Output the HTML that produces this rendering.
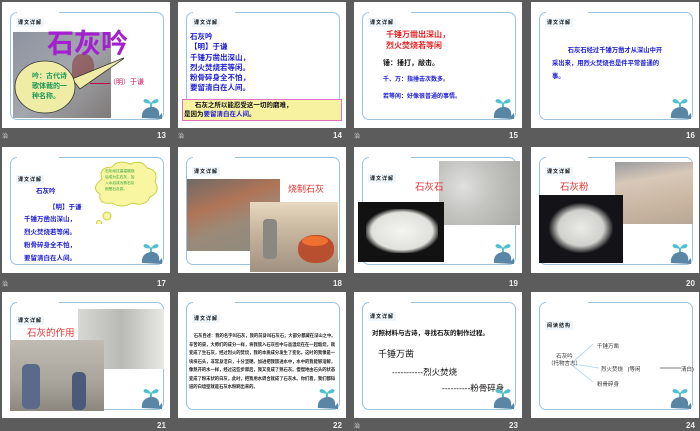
<!DOCTYPE html>
<html><head><meta charset="utf-8"><style>
*{margin:0;padding:0;box-sizing:border-box}
body{width:700px;height:431px;background:#5c5c5c;position:relative;overflow:hidden;font-family:"Liberation Sans","Noto Sans CJK SC",sans-serif}
.s{position:absolute;width:168px;height:126px;background:#fff;overflow:hidden}
.f{position:absolute;left:8px;top:10px;width:154px;height:108px;border:1.5px solid #9cc3dc;border-radius:7px}
.g{position:absolute;left:15px;top:8px;width:42px;height:4px;background:#fff}
.lab{position:absolute;left:14px;top:16px;font-size:5px;font-weight:bold;color:#111;background:#eef6fb;padding:1px 2px;letter-spacing:1px}
.n{position:absolute;color:#eee;font-size:8px;font-weight:bold}
.z{position:absolute;color:#ddd;font-size:6px}
.a{position:absolute;white-space:nowrap}
.w{position:absolute;left:137px;top:92px}
.bl{color:#1a1ad8;font-weight:bold}
</style></head><body>

<!-- Slide 13 -->
<div class="s" style="left:2px;top:2px">
<div class="f"></div><div class="g"></div>
<div style="position:absolute;left:11px;top:30px;width:98px;height:86px;background:linear-gradient(135deg,#8d93a0,#a3a6ad 50%,#7f7a78)"></div>
<div style="position:absolute;left:70px;top:52px;width:22px;height:30px;background:#8b4a4a;border-radius:40%;opacity:.7"></div>
<div class="lab">课文详解</div>
<div class="a" style="left:45px;top:20px;font-size:27px;color:#a41fd0;font-weight:bold">石灰吟</div>
<svg style="position:absolute;left:12px;top:55px" width="110" height="60"><path d="M58 22 L112 0 L66 32 Z" fill="#efeca5" stroke="#333" stroke-width=".8"/><ellipse cx="31" cy="30" rx="30" ry="26" fill="#efeca5" stroke="#333" stroke-width=".8"/></svg>
<div class="a" style="left:30px;top:70px;font-size:7px;line-height:10px;color:#1a9a5a;font-weight:bold">吟：古代诗<br>歌体裁的一<br>种名称。</div>
<div style="position:absolute;left:88px;top:81px;width:20px;height:1px;background:#c00040"></div>
<div class="a" style="left:107px;top:75px;font-size:7px;color:#d0105a">（明）于谦</div>
<svg class="w" width="24" height="26" viewBox="0 0 24 26"><path d="M12 9 C8 3 3 5 5 8 C7 10 10 9 12 10 C14 9 17 10 19 8 C21 5 16 3 12 9z" fill="#4fc0d0"/><rect x="11" y="9" width="2" height="5" fill="#4fc0d0"/><path d="M3 24 C2 16 8 13 13 13 C19 13 21 18 20 22 L23 19 L23 25 Z" fill="#5a86a6"/></svg>
</div>
<div class="z" style="left:2px;top:131px">治</div><div class="n" style="left:157px;top:131px">13</div>

<!-- Slide 14 -->
<div class="s" style="left:178px;top:2px">
<div class="f"></div><div class="g"></div>
<div class="lab">课文详解</div>
<div class="a bl" style="left:12px;top:30px;font-size:7.5px;line-height:10.3px">石灰吟<br>【明】于谦<br>千锤万凿出深山，<br>烈火焚烧若等闲。<br>粉骨碎身全不怕，<br>要留清白在人间。</div>
<svg class="w" width="24" height="26" viewBox="0 0 24 26"><path d="M12 9 C8 3 3 5 5 8 C7 10 10 9 12 10 C14 9 17 10 19 8 C21 5 16 3 12 9z" fill="#4fc0d0"/><rect x="11" y="9" width="2" height="5" fill="#4fc0d0"/><path d="M3 24 C2 16 8 13 13 13 C19 13 21 18 20 22 L23 19 L23 25 Z" fill="#5a86a6"/></svg>
<div style="position:absolute;left:4px;top:97px;width:160px;height:22px;background:#f7f2a0;border:1px solid #e070c0"></div>
<div class="a" style="left:6px;top:99px;font-size:6.5px;line-height:9px;color:#111;font-weight:bold">&nbsp;&nbsp;&nbsp;&nbsp;&nbsp;&nbsp;石灰之所以能忍受这一切的磨难，<br>是因为<span style="color:#1a1ad8">要留清白在人间</span>。</div>
</div>
<div class="z" style="left:178px;top:131px">治</div><div class="n" style="left:333px;top:131px">14</div>

<!-- Slide 15 -->
<div class="s" style="left:354px;top:2px">
<div class="f"></div><div class="g"></div>
<div class="lab">课文详解</div>
<div class="a" style="left:32px;top:27px;font-size:8px;line-height:11px;color:#e82020;font-weight:bold">千锤万凿出深山，<br>烈火焚烧若等闲</div>
<div class="a" style="left:29px;top:56px;font-size:7px;color:#111;font-weight:bold">锤：捶打，敲击。</div>
<div class="a bl" style="left:29px;top:72px;font-size:6px">千、万：指捶击次数多。</div>
<div class="a bl" style="left:29px;top:89px;font-size:6px">若等闲：好像很普通的事情。</div>
<svg class="w" width="24" height="26" viewBox="0 0 24 26"><path d="M12 9 C8 3 3 5 5 8 C7 10 10 9 12 10 C14 9 17 10 19 8 C21 5 16 3 12 9z" fill="#4fc0d0"/><rect x="11" y="9" width="2" height="5" fill="#4fc0d0"/><path d="M3 24 C2 16 8 13 13 13 C19 13 21 18 20 22 L23 19 L23 25 Z" fill="#5a86a6"/></svg>
</div>
<div class="z" style="left:354px;top:131px">治</div><div class="n" style="left:509px;top:131px">15</div>

<!-- Slide 16 -->
<div class="s" style="left:531px;top:2px">
<div class="f"></div><div class="g"></div>
<div class="lab">课文详解</div>
<div class="a bl" style="left:21px;top:42px;font-size:6.3px;line-height:13px">&nbsp;&nbsp;&nbsp;&nbsp;&nbsp;&nbsp;&nbsp;&nbsp;&nbsp;石灰石经过千锤万凿才从深山中开<br>采出来，用烈火焚烧也是件平常普通的<br>事。</div>
<svg class="w" width="24" height="26" viewBox="0 0 24 26"><path d="M12 9 C8 3 3 5 5 8 C7 10 10 9 12 10 C14 9 17 10 19 8 C21 5 16 3 12 9z" fill="#4fc0d0"/><rect x="11" y="9" width="2" height="5" fill="#4fc0d0"/><path d="M3 24 C2 16 8 13 13 13 C19 13 21 18 20 22 L23 19 L23 25 Z" fill="#5a86a6"/></svg>
</div>
<div class="n" style="left:686px;top:131px">16</div>

<!-- Slide 17 -->
<div class="s" style="left:2px;top:147px">
<div class="f"></div><div class="g"></div>
<div class="lab" style="top:28px">课文详解</div>
<div class="a bl" style="left:34px;top:38px;font-size:6.5px">石灰吟</div>
<div class="a bl" style="left:47px;top:54px;font-size:6.5px">【明】于谦</div>
<div class="a bl" style="left:22px;top:66px;font-size:6.5px;line-height:13px">千锤万凿出深山，<br>烈火焚烧若等闲。<br>粉骨碎身全不怕，<br>要留清白在人间。</div>
<svg style="position:absolute;left:88px;top:12px" width="72" height="65"><path d="M12 20 q-4 -12 10 -12 q6 -8 18 -3 q12 -5 17 4 q12 2 8 14 q6 10 -5 15 q-4 10 -18 6 q-10 6 -20 0 q-14 2 -12 -9 q-10 -6 2 -15z" fill="#f8f6a0" stroke="#c8d040" stroke-width="1"/><circle cx="17" cy="57" r="4" fill="#f8f6a0" stroke="#c8d040"/><circle cx="9" cy="64" r="2.5" fill="#f8f6a0" stroke="#c8d040"/></svg>
<div class="a" style="left:103px;top:21px;font-size:3.7px;line-height:6px;color:#2a9a3a">石灰经过高温锻烧<br>后成为生石灰，加<br>入水后成为熟石灰<br>即是石灰浆。</div>
<svg class="w" width="24" height="26" viewBox="0 0 24 26"><path d="M12 9 C8 3 3 5 5 8 C7 10 10 9 12 10 C14 9 17 10 19 8 C21 5 16 3 12 9z" fill="#4fc0d0"/><rect x="11" y="9" width="2" height="5" fill="#4fc0d0"/><path d="M3 24 C2 16 8 13 13 13 C19 13 21 18 20 22 L23 19 L23 25 Z" fill="#5a86a6"/></svg>
</div>
<div class="z" style="left:2px;top:279px">治</div><div class="n" style="left:157px;top:279px">17</div>

<!-- Slide 18 -->
<div class="s" style="left:178px;top:147px">
<div class="f"></div><div class="g"></div>
<div class="lab" style="top:20px">课文详解</div>
<div style="position:absolute;left:9px;top:32px;width:93px;height:72px;background:linear-gradient(160deg,#6e6a66,#b07458 35%,#9c8a78 60%,#8a8a80)"></div>
<div style="position:absolute;left:72px;top:55px;width:88px;height:70px;background:linear-gradient(180deg,#e8d8c0,#c8b8a0 40%,#a09080);"></div>
<div style="position:absolute;left:120px;top:88px;width:36px;height:28px;border-radius:45%;background:#b85030"></div>
<div style="position:absolute;left:124px;top:89px;width:26px;height:10px;border-radius:50%;background:#f07030"></div>
<div style="position:absolute;left:85px;top:72px;width:14px;height:40px;background:#8a8880;border-radius:4px"></div>
<div class="a" style="left:110px;top:35px;font-size:9px;color:#e83030">烧制石灰</div>
</div>
<div class="n" style="left:333px;top:279px">18</div>

<!-- Slide 19 -->
<div class="s" style="left:354px;top:147px">
<div class="f"></div><div class="g"></div>
<div class="lab" style="top:27px">课文详解</div>
<div style="position:absolute;left:85px;top:14px;width:81px;height:64px;background:radial-gradient(circle at 30% 40%,#e0e0e0,#c4c4c0 40%,#a8a8a4)"></div>
<div class="a" style="left:61px;top:32px;font-size:9.5px;color:#e83030">石灰石</div>
<div style="position:absolute;left:4px;top:55px;width:86px;height:60px;background:#121212"></div>
<div style="position:absolute;left:12px;top:62px;width:72px;height:44px;background:radial-gradient(ellipse at 50% 50%,#f4f4f0,#e0e0dc 60%,#121212 75%)"></div>
<svg class="w" width="24" height="26" viewBox="0 0 24 26"><path d="M12 9 C8 3 3 5 5 8 C7 10 10 9 12 10 C14 9 17 10 19 8 C21 5 16 3 12 9z" fill="#4fc0d0"/><rect x="11" y="9" width="2" height="5" fill="#4fc0d0"/><path d="M3 24 C2 16 8 13 13 13 C19 13 21 18 20 22 L23 19 L23 25 Z" fill="#5a86a6"/></svg>
</div>
<div class="n" style="left:509px;top:279px">19</div>

<!-- Slide 20 -->
<div class="s" style="left:531px;top:147px">
<div class="f"></div><div class="g"></div>
<div class="lab" style="top:20px">课文详解</div>
<div class="a" style="left:29px;top:32px;font-size:9.5px;color:#e83030">石灰粉</div>
<div style="position:absolute;left:84px;top:15px;width:78px;height:62px;background:linear-gradient(170deg,#9a9ca0,#d8c8b8 30%,#c8b4a0 70%,#b8a898)"></div>
<div style="position:absolute;left:8px;top:48px;width:84px;height:68px;background:#141418"></div>
<div style="position:absolute;left:18px;top:56px;width:64px;height:50px;background:radial-gradient(ellipse,#eaeae6,#d0d0cc 50%,#141418 72%)"></div>
<svg class="w" width="24" height="26" viewBox="0 0 24 26"><path d="M12 9 C8 3 3 5 5 8 C7 10 10 9 12 10 C14 9 17 10 19 8 C21 5 16 3 12 9z" fill="#4fc0d0"/><rect x="11" y="9" width="2" height="5" fill="#4fc0d0"/><path d="M3 24 C2 16 8 13 13 13 C19 13 21 18 20 22 L23 19 L23 25 Z" fill="#5a86a6"/></svg>
</div>
<div class="n" style="left:686px;top:279px">20</div>

<!-- Slide 21 -->
<div class="s" style="left:2px;top:292px">
<div class="f"></div><div class="g"></div>
<div style="position:absolute;left:76px;top:17px;width:86px;height:60px;background:linear-gradient(90deg,#d8d8d4,#b8b8b4 50%,#e8e8e4)"></div>
<div style="position:absolute;left:8px;top:48px;width:94px;height:71px;background:linear-gradient(180deg,#c0bcb4,#a8a49c 60%,#8c8880)"></div>
<div style="position:absolute;left:20px;top:72px;width:18px;height:45px;background:#5a6a88;border-radius:5px"></div>
<div style="position:absolute;left:70px;top:80px;width:14px;height:38px;background:#4a5a78;border-radius:5px"></div>
<div class="lab" style="top:24px">课文详解</div>
<div class="a" style="left:25px;top:33px;font-size:9.5px;color:#e83030;background:#fff">石灰的作用</div>
<svg class="w" width="24" height="26" viewBox="0 0 24 26"><path d="M12 9 C8 3 3 5 5 8 C7 10 10 9 12 10 C14 9 17 10 19 8 C21 5 16 3 12 9z" fill="#4fc0d0"/><rect x="11" y="9" width="2" height="5" fill="#4fc0d0"/><path d="M3 24 C2 16 8 13 13 13 C19 13 21 18 20 22 L23 19 L23 25 Z" fill="#5a86a6"/></svg>
</div>
<div class="n" style="left:157px;top:421px">21</div>

<!-- Slide 22 -->
<div class="s" style="left:178px;top:292px">
<div class="f"></div><div class="g"></div>
<div class="lab" style="top:22px">课文详解</div>
<div class="a" style="left:11px;top:40px;width:150px;white-space:normal;font-size:4.3px;line-height:8.5px;color:#222;font-weight:bold">&nbsp;&nbsp;&nbsp;&nbsp;石灰自述：我的名字叫石灰，我的前身叫石灰石，大部分都藏在深山之中。辛苦的采，大师们的成分一样，将我放入石灰窑中与高温烧在在一起煅烧，就变成了生石灰，经过烈火的焚烧，我的本质成分发生了变化。这时的我像是一块块石头，非常身洁白，十分坚硬。加进把我放进水中，水中的我能够溶解，像熬开的水一样，经过这些步骤后，我又变成了熟石灰。慢慢地由石头的状态变成了粉末状的白灰，此时，把我用水调合就成了石灰水。你们看，我们都知道的白墙壁就是石灰水粉刷出来的。</div>
<svg class="w" width="24" height="26" viewBox="0 0 24 26"><path d="M12 9 C8 3 3 5 5 8 C7 10 10 9 12 10 C14 9 17 10 19 8 C21 5 16 3 12 9z" fill="#4fc0d0"/><rect x="11" y="9" width="2" height="5" fill="#4fc0d0"/><path d="M3 24 C2 16 8 13 13 13 C19 13 21 18 20 22 L23 19 L23 25 Z" fill="#5a86a6"/></svg>
</div>
<div class="n" style="left:333px;top:421px">22</div>

<!-- Slide 23 -->
<div class="s" style="left:354px;top:292px">
<div class="f"></div><div class="g"></div>
<div class="lab" style="top:20px">课文详解</div>
<div class="a" style="left:18px;top:35px;font-size:6.5px;color:#111;font-weight:bold">对照材料与古诗，寻找石灰的制作过程。</div>
<div class="a" style="left:24px;top:55px;font-size:9px;color:#111">千锤万凿</div>
<div class="a" style="left:38px;top:74px;font-size:8.5px;color:#111">-----------烈火焚烧</div>
<div class="a" style="left:88px;top:90px;font-size:8.5px;color:#111">----------粉骨碎身</div>
<svg class="w" width="24" height="26" viewBox="0 0 24 26"><path d="M12 9 C8 3 3 5 5 8 C7 10 10 9 12 10 C14 9 17 10 19 8 C21 5 16 3 12 9z" fill="#4fc0d0"/><rect x="11" y="9" width="2" height="5" fill="#4fc0d0"/><path d="M3 24 C2 16 8 13 13 13 C19 13 21 18 20 22 L23 19 L23 25 Z" fill="#5a86a6"/></svg>
</div>
<div class="z" style="left:354px;top:421px">治</div><div class="n" style="left:509px;top:421px">23</div>

<!-- Slide 24 -->
<div class="s" style="left:531px;top:292px">
<div class="f"></div><div class="g"></div>
<div class="lab" style="top:29px">阅读结构</div>
<svg style="position:absolute;left:0;top:0" width="168" height="126"><path d="M42 70 L62 52 M42 72 L68 76 M42 74 L62 90" stroke="#b8dce8" stroke-width="1" fill="none"/><path d="M129 76 L150 76" stroke="#555" stroke-width=".8"/></svg>
<div class="a" style="left:17px;top:62px;font-size:5.5px;line-height:7px;color:#333;text-align:center">石灰吟<br>（托物言志）</div>
<div class="a" style="left:66px;top:50px;font-size:5.5px;color:#333">千锤万凿</div>
<div class="a" style="left:70px;top:73px;font-size:5.5px;color:#333">烈火焚烧 &nbsp;&nbsp;(等闲</div>
<div class="a" style="left:150px;top:73px;font-size:5.5px;color:#333">清白)</div>
<div class="a" style="left:66px;top:88px;font-size:5.5px;color:#333">粉骨碎身</div>
<svg class="w" width="24" height="26" viewBox="0 0 24 26"><path d="M12 9 C8 3 3 5 5 8 C7 10 10 9 12 10 C14 9 17 10 19 8 C21 5 16 3 12 9z" fill="#4fc0d0"/><rect x="11" y="9" width="2" height="5" fill="#4fc0d0"/><path d="M3 24 C2 16 8 13 13 13 C19 13 21 18 20 22 L23 19 L23 25 Z" fill="#5a86a6"/></svg>
</div>
<div class="n" style="left:686px;top:421px">24</div>

</body></html>
